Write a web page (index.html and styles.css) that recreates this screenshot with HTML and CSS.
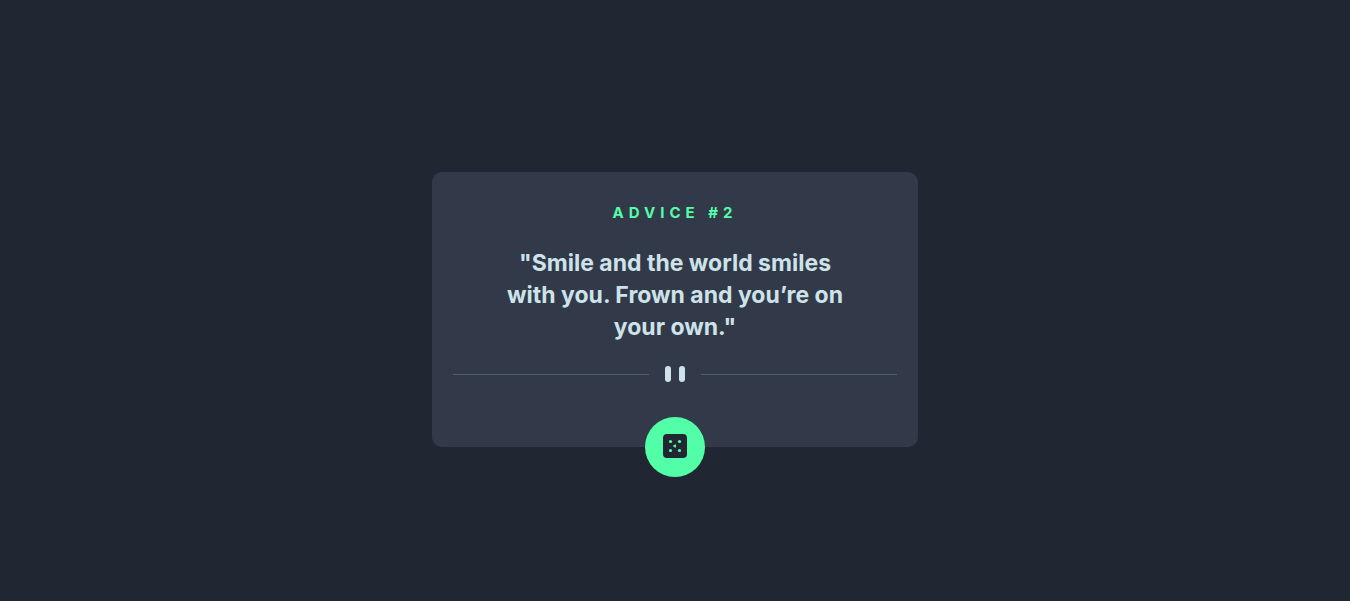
FILE: index.html
```html
<!DOCTYPE html>
<html lang="en">
<head>
<meta charset="utf-8">
<meta name="viewport" content="width=device-width, initial-scale=1">
<title>Advice generator</title>
<link rel="stylesheet" href="styles.css">
</head>
<body>
<main class="card">
  <h1 class="title">Advice #2</h1>
  <p class="quote">"Smile and the world smiles with you. Frown and you’re on your own."</p>
  <div class="divider">
    <span class="line"></span>
    <svg class="pause" width="20" height="16" viewBox="0 0 20 16" aria-hidden="true"><rect width="6" height="16" rx="3"/><rect x="14" width="6" height="16" rx="3"/></svg>
    <span class="line"></span>
  </div>
  <button class="dice" type="button" aria-label="New advice">
    <svg width="24" height="24" viewBox="0 0 24 24" aria-hidden="true"><rect width="24" height="24" rx="4" fill="#202733"/><g fill="#52ffa8"><circle cx="7.500" cy="7.500" r="1.600"/><circle cx="16.500" cy="7.500" r="1.600"/><circle cx="7.500" cy="16.500" r="1.600"/><circle cx="16.500" cy="16.500" r="1.600"/><path d="M13 10.500v3h-1L10.300 12.400v-.8L12 10.500Z"/></g></svg>
  </button>
</main>
</body>
</html>
```
FILE: styles.css
```css
* { box-sizing: border-box; }
body {
  margin: 0;
  min-height: 100vh;
  display: flex;
  align-items: center;
  justify-content: center;
  padding-top: 18px;
  background: #202632;
  font-family: Inter, "Open Sans", sans-serif;
}
.card {
  width: 36%;
  min-width: 300px;
  display: flex;
  flex-direction: column;
  align-items: center;
  padding: 32px 21px 0;
  border-radius: 10px;
  background: #323a49;
  text-align: center;
}
.title {
  margin: 0 0 25px;
  color: #52ffa8;
  font-size: 15px;
  line-height: 18px;
  font-weight: 700;
  letter-spacing: 5px;
  text-transform: uppercase;
}
.quote {
  margin: 0 0 23px;
  max-width: 350px;
  color: #cee3e9;
  font-size: 23px;
  line-height: 32px;
  font-weight: 700;
}
.divider {
  width: 100%;
  display: flex;
  align-items: center;
  gap: 16px;
  margin-bottom: 35px;
}
.line { flex: 1; height: 1px; background: #4f5d74; }
.pause { fill: #cee3e9; }
.dice {
  width: 60px;
  height: 60px;
  display: grid;
  place-items: center;
  margin-bottom: -30px;
  padding: 0 0 2px;
  border: 0;
  border-radius: 50%;
  background: #52ffa8;
  cursor: pointer;
}
```
